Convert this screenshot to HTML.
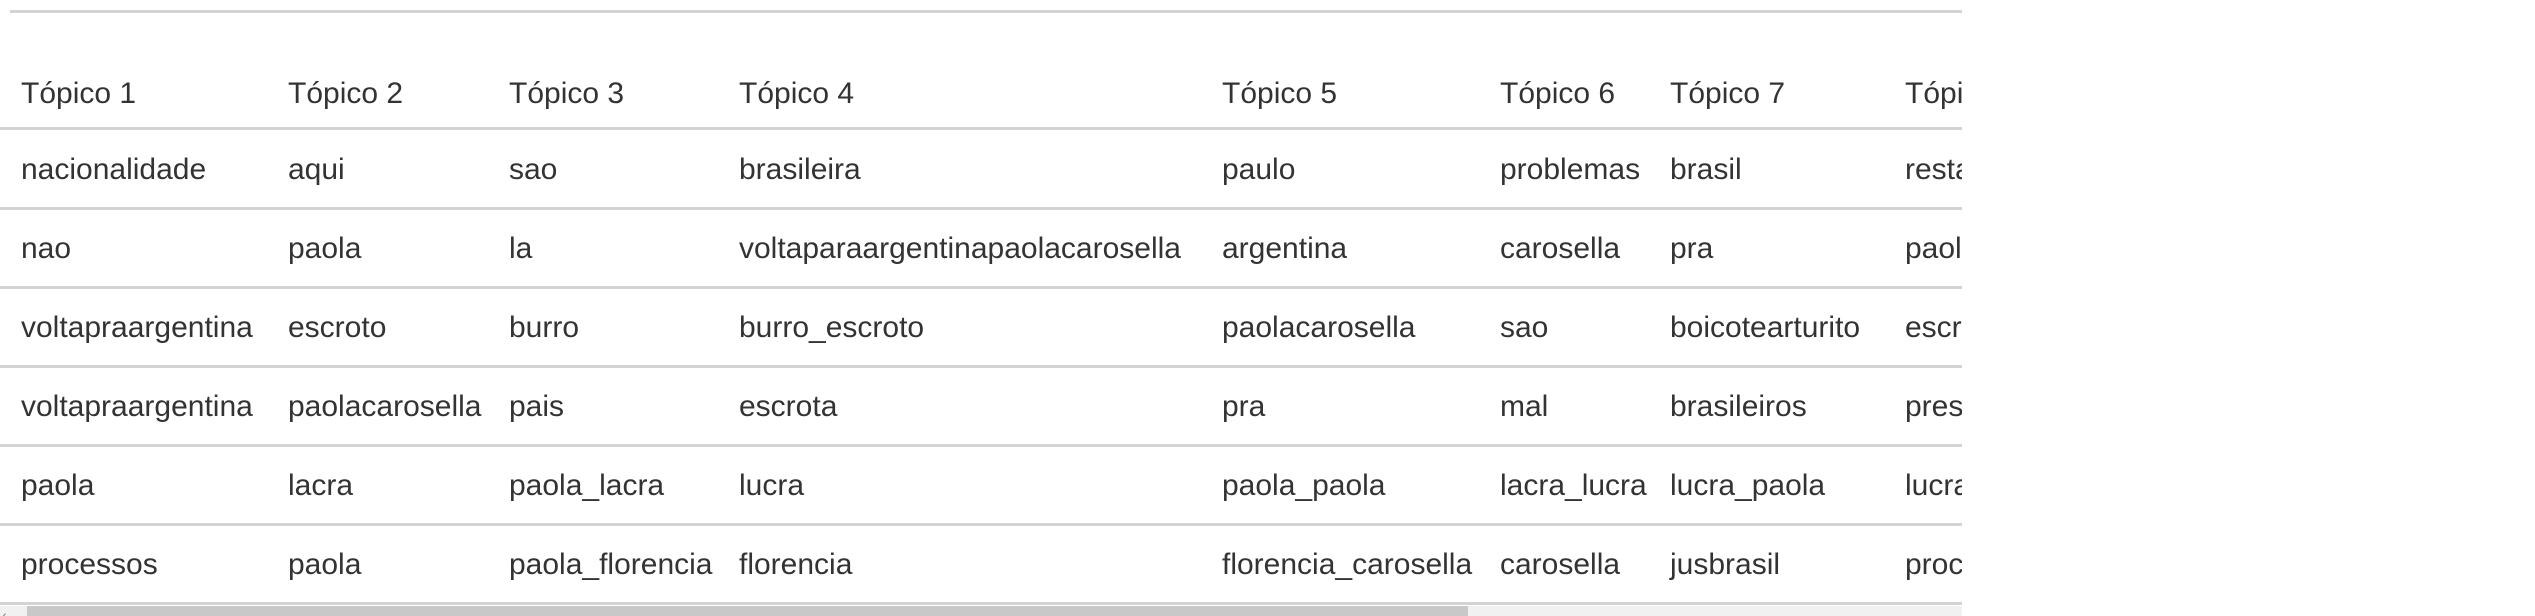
<!DOCTYPE html>
<html><head><meta charset="utf-8"><style>
html,body{margin:0;padding:0;background:#fff;width:2535px;height:616px;overflow:hidden}
.wrap{position:absolute;left:0;top:0;width:1962px;height:616px;overflow:hidden}
.line{position:absolute;left:0;width:1962px;height:3px;background:#d3d3d3}
.t{position:absolute;font-family:"Liberation Sans",sans-serif;font-size:30px;color:#333;white-space:nowrap;line-height:30px}
.sb{position:absolute;left:0;top:606px;width:1962px;height:10px;background:#f1f1f1}
.th{position:absolute;left:27px;top:606px;width:1441px;height:10px;background:#c8c8c8}
</style></head><body><div class="wrap">
<div class="line" style="top:10px;left:10px"></div>
<div class="line" style="top:127px"></div>
<div class="line" style="top:207px"></div>
<div class="line" style="top:286px"></div>
<div class="line" style="top:365px"></div>
<div class="line" style="top:444px"></div>
<div class="line" style="top:523px"></div>
<div class="line" style="top:602px"></div>
<div class="sb"></div><div class="th"></div>
<div class="t" style="left:2px;top:600px;font-size:14px;color:#777">‹</div>
<div id="g"></div>
</div>
<script>
var xs=[21,288,509,739,1222,1500,1670,1905];
var rows=[["Tópico 1","Tópico 2","Tópico 3","Tópico 4","Tópico 5","Tópico 6","Tópico 7","Tópico 8"],
["nacionalidade","aqui","sao","brasileira","paulo","problemas","brasil","restaurante"],
["nao","paola","la","voltaparaargentinapaolacarosella","argentina","carosella","pra","paola"],
["voltapraargentina","escroto","burro","burro_escroto","paolacarosella","sao","boicotearturito","escroto"],
["voltapraargentina","paolacarosella","pais","escrota","pra","mal","brasileiros","presidente"],
["paola","lacra","paola_lacra","lucra","paola_paola","lacra_lucra","lucra_paola","lucra"],
["processos","paola","paola_florencia","florencia","florencia_carosella","carosella","jusbrasil","processos"]];
var ys=[79,155,234,313,392,471,550];
var h="";
rows.forEach(function(r,i){r.forEach(function(c,j){h+='<div class="t" style="left:'+xs[j]+'px;top:'+ys[i]+'px">'+c+'</div>';});});
document.getElementById("g").innerHTML=h;
</script>
</body></html>
